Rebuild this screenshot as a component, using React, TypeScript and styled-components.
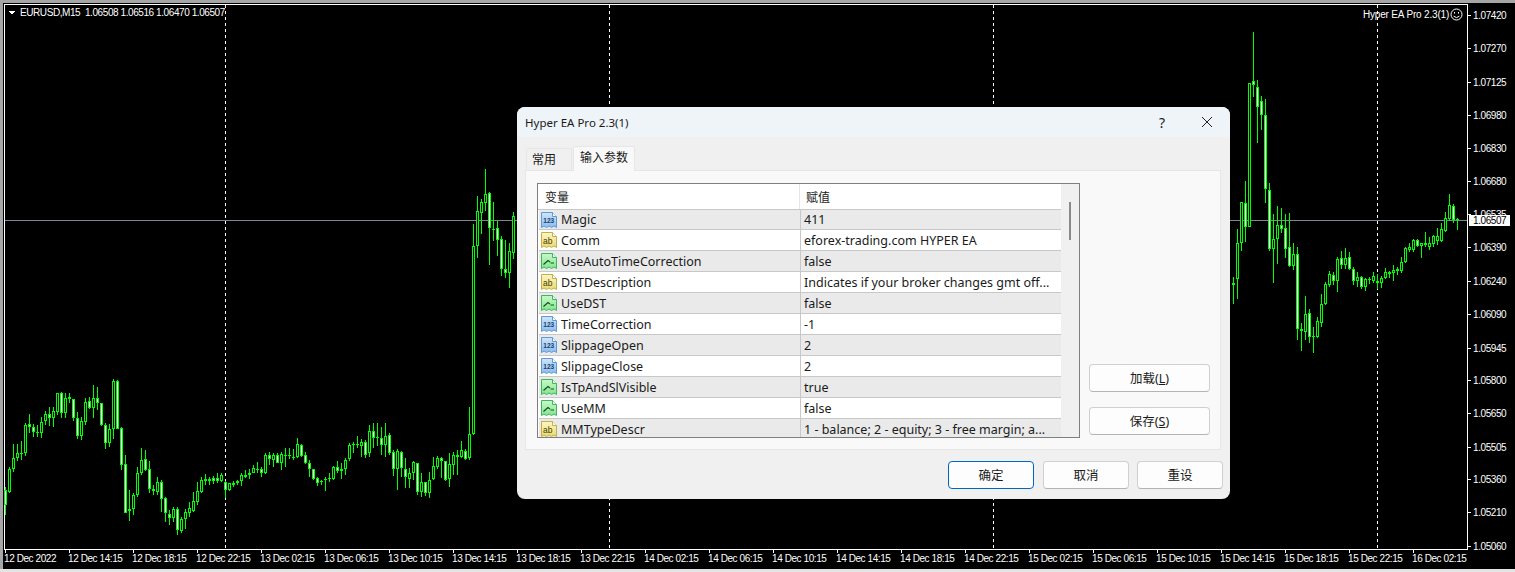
import React from "react";
import styled, { createGlobalStyle } from "styled-components";

const Global = createGlobalStyle`
  html, body { margin: 0; padding: 0; background: #000; overflow: hidden; }
  #root { width: 1515px; height: 572px; }
`;

type C = number[];
const segA: C[] = [
[350,360,405,435,1],[290,298,365,368,0],[222,265,298,305,0],[222,250,265,272,0],[213,250,250,270,0],[160,166,250,258,0],[132,163,170,190,1],[162,170,185,200,1],[165,185,188,200,0],[140,155,188,205,0],[122,133,152,165,0],[112,133,143,168,1],[110,124,143,172,0],[68,70,125,135,0],[65,68,128,143,1],[68,85,128,143,0],[68,82,88,100,1],[88,88,143,152,1],[125,145,197,208,1],[140,153,197,210,0],[85,95,155,165,0],[80,92,113,118,1],[45,85,113,145,0],[52,85,100,120,1],[98,100,166,168,1],[160,166,220,236,1],[163,178,220,232,0],[28,34,178,208,0],[30,34,176,178,1],[172,175,284,300,1],[255,283,428,430,1],[360,418,422,452,0],[368,376,418,435,0],[290,310,374,380,0],[235,270,310,316,0],[240,268,300,302,1],[272,298,358,370,1],[345,358,362,375,0],[322,336,365,376,0],[330,336,386,425,1],[380,385,430,456,1],[420,433,443,465,1],[410,418,443,455,0],[412,418,480,496,1],[440,448,483,490,0],[418,427,448,478,0],[395,415,428,440,0],[365,394,422,425,0],[335,364,395,405,0],[320,330,365,370,0],[312,328,332,345,0],[320,326,332,346,1],[318,324,332,342,1],[310,324,332,338,1],[308,316,332,335,0],[333,335,360,385,1],[340,340,360,362,0],[332,340,344,350,0],[330,334,340,345,0],[308,316,332,348,0],[300,316,320,325,0],[298,310,316,328,0],[285,294,308,310,0],[277,296,298,310,1],
];
const segB: C[] = [
[290,298,308,320,1],[250,256,308,312,0],[245,256,268,285,1],[250,254,270,290,0],[250,254,278,280,1],[245,252,278,300,0],[235,254,258,290,0],[235,256,256,266,0],[238,260,262,270,0],[205,222,262,265,0],[222,224,258,262,1],[245,256,278,282,1],[270,278,298,322,1],[296,298,326,330,1],[322,323,338,347,1],[330,332,335,345,0],[320,326,330,362,0],[308,325,328,335,0],[288,292,326,330,0],[272,292,302,308,1],[280,298,302,328,0],[265,270,298,315,0],[220,226,268,272,0],[215,222,224,250,0],[198,222,224,235,0],[208,216,228,262,0],[210,216,255,263,1],[165,184,250,260,0],[160,183,203,235,1],[158,202,205,228,1],[172,204,224,255,1],[158,198,224,262,0],[190,196,250,255,1],[240,246,296,318,1],[238,244,296,360,0],[244,246,293,320,1],[265,296,322,355,1],[295,310,326,353,0],[272,277,308,330,0],[278,280,365,375,1],[308,337,366,380,0],[335,337,368,378,1],[305,331,368,383,0],[262,289,328,330,0],[258,264,290,298,0],[260,265,274,325,1],[272,274,330,332,1],[250,283,328,352,0],[245,254,284,316,0],[240,256,262,315,1],
];
const segC: C[] = [
[843,870,890,895,0],[868,874,896,900,1],[742,823,895,900,0],[192,259,823,825,0],[108,154,257,293,0],[118,127,160,222,0],[27,103,128,153,0],[97,100,205,315,1],[126,207,208,243,0],[182,205,239,288,1],[228,238,328,348,1],[240,328,338,354,1],[250,274,338,384,0],[155,169,278,296,0],
];
const segD: C[] = [
[772,790,794,852,1],[628,670,776,836,0],[545,546,670,692,0],[484,548,622,665,1],[190,190,622,622,0],[37,184,196,232,1],[180,200,260,368,1],[228,244,284,330,1],[238,286,508,548,1],[488,511,688,692,1],[582,658,686,790,0],[558,616,656,732,0],[564,614,626,640,1],[582,625,686,714,1],[580,682,738,740,1],[670,703,738,750,0],[680,703,926,960,1],[910,926,932,992,1],[828,882,936,960,0],[868,880,950,970,1],[920,948,950,998,0],[892,904,950,955,0],[822,853,908,920,0],[785,793,853,855,0],[752,763,794,800,0],[755,766,784,795,1],[712,718,782,815,0],[694,714,734,748,1],[684,714,734,748,0],[695,712,746,750,1],[742,748,782,795,1],[755,772,782,800,0],[768,772,800,808,1],[775,778,800,812,0],[770,776,778,792,0],[755,768,782,790,0],[762,784,788,808,1],[768,774,790,805,0],[745,756,775,778,0],[752,756,762,775,0],[735,750,758,782,0],[742,746,752,765,0],[712,725,752,758,0],[680,684,726,730,0],[668,682,690,695,0],[658,660,690,695,0],[658,660,678,682,1],[668,670,678,715,0],[636,670,676,680,0],[652,670,682,690,0],[645,648,672,682,0],[625,648,662,675,0],[610,628,662,665,0],[575,595,632,636,0],[522,556,598,600,0],[552,558,600,610,1],[595,598,600,630,0],
];

const toCandles = (seg: C[], startX: number, originY: number) =>
  seg.map(([hi, top, bot, lo, white], i) => ({
    x: startX + i * 4,
    hi: Math.round(originY + hi / 3),
    top: Math.round(originY + top / 3),
    bot: Math.round(originY + bot / 3),
    lo: Math.round(originY + lo / 3),
    white: !!white,
  }));

const candles = [
  ...toCandles(segA, 5, 370),
  ...toCandles(segB, 261, 370),
  ...toCandles(segC, 461, 160),
  ...toCandles(segD, 1233, 20),
];

const prices = ["1.07420","1.07270","1.07125","1.06980","1.06830","1.06680","1.06535","1.06390","1.06240","1.06090","1.05945","1.05800","1.05650","1.05505","1.05360","1.05210","1.05060"];
const priceY = [15,48,82,115,148,181,214,247,281,314,348,380,413,447,479,512,546];

const hours = ["02:15","06:15","10:15","14:15","18:15","22:15"];
const times = [
  "12 Dec 2022","12 Dec 14:15","12 Dec 18:15","12 Dec 22:15",
  ...hours.map((h) => `13 Dec ${h}`),
  ...hours.map((h) => `14 Dec ${h}`),
  ...hours.map((h) => `15 Dec ${h}`),
  "16 Dec 02:15",
];

const Page = styled.div`
  position: relative;
  width: 1515px;
  height: 572px;
  background: #000;
  overflow: hidden;
`;

const ChartSvg = styled.svg`
  display: block;
`;

const ChartText = styled.text<{ $loose?: boolean }>`
  font-family: "Liberation Sans", Arial, sans-serif;
  font-size: 10px;
  letter-spacing: ${(p) => (p.$loose ? "-0.18px" : "-0.42px")};
  fill: #fff;
  white-space: pre;
`;

const TagText = styled(ChartText)`
  fill: #000;
`;

const Chart = () => (
  <ChartSvg width={1515} height={572} viewBox="0 0 1515 572" shapeRendering="crispEdges">
    <rect x={0} y={0} width={1515} height={3} fill="#a6a6a6" />
    <rect x={0} y={0} width={2.5} height={572} fill="#a6a6a6" />
    <rect x={0} y={569} width={1515} height={3} fill="#e4e4e4" />
    <rect x={4} y={4} width={1464} height={1} fill="#fff" />
    <rect x={4} y={4} width={1} height={546} fill="#fff" />
    <rect x={1467} y={4} width={1} height={546} fill="#fff" />
    <rect x={4} y={549} width={1464} height={1} fill="#fff" />

    {[225, 609, 993, 1377].map((x) => (
      <line key={x} x1={x + 0.5} x2={x + 0.5} y1={5} y2={548} stroke="#fff" strokeDasharray="3 3" />
    ))}
    <rect x={5} y={220} width={1462} height={1} fill="#778899" />

    {candles.map((c) => (
      <g key={c.x}>
        <rect x={c.x} y={c.hi} width={1} height={Math.max(c.lo - c.hi, 1)} fill="#00ff00" />
        <rect x={c.x - 1} y={c.top} width={3} height={Math.max(c.bot - c.top, 1)} fill="#00ff00" />
        {c.bot - c.top > 2 && (
          <rect x={c.x} y={c.top + 1} width={1} height={c.bot - c.top - 2} fill={c.white ? "#fff" : "#000"} />
        )}
      </g>
    ))}

    {prices.map((p, i) => (
      <g key={p}>
        <rect x={1468} y={priceY[i]} width={3} height={1} fill="#fff" />
        <ChartText x={1473} y={priceY[i] + 4}>{p}</ChartText>
      </g>
    ))}
    <rect x={1469} y={215} width={41} height={11} fill="#fff" />
    <TagText x={1473} y={224}>1.06507</TagText>

    {times.map((t, i) => (
      <g key={i}>
        <rect x={5 + i * 64} y={550} width={1} height={3} fill="#fff" />
        <ChartText x={4 + i * 64} y={562}>{t}</ChartText>
      </g>
    ))}

    <polygon points="8,11 15,11 11.5,14.5" fill="#fff" />
    <ChartText x={20} y={16}>EURUSD,M15  1.06508 1.06516 1.06470 1.06507</ChartText>
    <ChartText $loose x={1363} y={17.5}>Hyper EA Pro 2.3(1)</ChartText>
    <g shapeRendering="auto" fill="none" stroke="#fff">
      <circle cx={1456.5} cy={14.5} r={5.5} />
      <path d="M1453.6 16.2 q2.9 2.8 5.8 0" />
      <path d="M1454.5 12 v1.6 M1458.5 12 v1.6" />
    </g>
  </ChartSvg>
);

const Dialog = styled.div`
  position: absolute;
  left: 517px;
  top: 107px;
  width: 713px;
  height: 392px;
  border-radius: 8px;
  background: #f0f0f0;
  overflow: hidden;
  display: flex;
  flex-direction: column;
  font-family: "Noto Sans", "Noto Sans CJK SC", sans-serif;
  font-size: 12px;
  color: #1a1a1a;
`;

const TitleBar = styled.div`
  height: 30px;
  flex: none;
  background: #eff4f9;
  display: flex;
  align-items: center;
  padding: 0 17px 0 8px;
`;

const Title = styled.div`
  flex: 1;
  font-size: 11.5px;
`;

const HelpMark = styled.span`
  font-size: 14px;
  margin-right: 36px;
`;

const Body = styled.div`
  flex: 1;
  display: flex;
  flex-direction: column;
  padding: 9px 9px 0 8px;
  min-height: 0;
`;

const Tabs = styled.div`
  display: flex;
  align-items: flex-end;
  height: 24px;
  padding-left: 1px;
  flex: none;
`;

const Tab = styled.div<{ $active?: boolean }>`
  height: ${(p) => (p.$active ? 25 : 22)}px;
  width: ${(p) => (p.$active ? 62 : 46)}px;
  margin-left: ${(p) => (p.$active ? 1 : 0)}px;
  box-sizing: border-box;
  padding-left: ${(p) => (p.$active ? 6 : 5)}px;
  line-height: 22px;
  background: ${(p) => (p.$active ? "#f9f9f9" : "#f0f0f0")};
  border: 1px solid #e6e6e6;
  border-bottom: none;
  border-radius: 2px 2px 0 0;
  position: relative;
  z-index: 1;
  margin-bottom: ${(p) => (p.$active ? -1 : 0)}px;
`;

const Panel = styled.div`
  width: 696px;
  height: 280px;
  box-sizing: border-box;
  background: #f9f9f9;
  border: 1px solid #e6e6e6;
  padding: 12px 10px 12px 11px;
  display: flex;
  gap: 9px;
`;

const Table = styled.div`
  width: 543px;
  height: 255px;
  box-sizing: border-box;
  border: 1px solid #7f7f7f;
  background: #fff;
  display: flex;
  overflow: hidden;
  flex: none;
`;

const Grid = styled.div`
  flex: 1;
  display: flex;
  flex-direction: column;
  padding-left: 1px;
  overflow: hidden;
`;

const ScrollBar = styled.div`
  width: 18px;
  flex: none;
  background: #f0f0f0;
  position: relative;
`;

const Thumb = styled.div`
  position: absolute;
  left: 8px;
  top: 18px;
  width: 2px;
  height: 38px;
  background: #8a8a8a;
`;

const HeaderRow = styled.div`
  height: 26px;
  flex: none;
  box-sizing: border-box;
  display: grid;
  grid-template-columns: 261px 1fr;
  background: #fff;
  border-bottom: 1px solid #c8c8c8;
  margin-left: -1px;
`;

const HeaderCell = styled.div`
  display: flex;
  align-items: center;
  padding-left: 7px;
  & + & {
    border-left: 1px solid #e6e6e6;
    padding-left: 6px;
  }
`;

const Row = styled.div<{ $shade: boolean; $first?: boolean }>`
  height: ${(p) => (p.$first ? 20 : 21)}px;
  flex: none;
  box-sizing: border-box;
  display: grid;
  grid-template-columns: 261px 1fr;
  background: ${(p) => (p.$shade ? "#eaeaea" : "#fff")};
  border-bottom: 1px solid #c8c8c8;
  font-size: 12.5px;
`;

const NameCell = styled.div`
  display: flex;
  align-items: center;
  gap: 4px;
  padding-left: 2px;
  white-space: nowrap;
`;

const ValueCell = styled.div`
  display: flex;
  align-items: center;
  padding-left: 3px;
  border-left: 1px solid #c8c8c8;
  white-space: nowrap;
  overflow: hidden;
`;

const Side = styled.div`
  flex: 1;
  display: flex;
  flex-direction: column;
  justify-content: flex-end;
  gap: 15px;
  padding-bottom: 2px;
`;

const Button = styled.button<{ $primary?: boolean }>`
  height: 28px;
  box-sizing: border-box;
  font: inherit;
  font-size: 12.5px;
  color: #1a1a1a;
  background: #fdfdfd;
  border: 1px solid ${(p) => (p.$primary ? "#0067c0" : "#d0d0d0")};
  border-bottom-color: ${(p) => (p.$primary ? "#0067c0" : "#b4b4b4")};
  border-radius: 4px;
  padding: 0 0 2px;
`;

const Footer = styled.div`
  flex: 1;
  display: flex;
  justify-content: flex-end;
  align-items: flex-start;
  gap: 8px;
  padding-top: 11px;
  margin-right: -2px;
`;

const FooterButton = styled(Button)`
  width: 86px;
  margin-right: ${(p) => (p.$primary ? 1 : 0)}px;
`;

const Under = styled.span`
  text-decoration: underline;
`;

const Kind = {
  num: { light: "#d0e5fa", dark: "#8ebbea", stroke: "#5c9ad8", ink: "#14406f" },
  str: { light: "#fbf6c6", dark: "#eadb72", stroke: "#c4ae45", ink: "#4a3c00" },
  bool: { light: "#c8f8c8", dark: "#86e48e", stroke: "#3db65f", ink: "#0b5420" },
};

const IconText = styled.text`
  font-family: "Liberation Sans", sans-serif;
  text-anchor: middle;
`;

const TypeIcon = ({ kind }: { kind: keyof typeof Kind }) => {
  const k = Kind[kind];
  const id = `icon-${kind}`;
  return (
    <svg width={16} height={16} viewBox="0 0 16 16" style={{ flex: "none" }}>
      <defs>
        <linearGradient id={id} x1="0" y1="0" x2="0" y2="1">
          <stop offset="0" stopColor={k.light} />
          <stop offset="1" stopColor={k.dark} />
        </linearGradient>
      </defs>
      <path
        d="M.5 .5 h11 l4 4 v11 l-2.5 -1.5 -2.5 1.5 -2.5 -1.5 -2.5 1.5 -2.5 -1.5 -2.5 1.5 z"
        fill={`url(#${id})`}
        stroke={k.stroke}
      />
      <path d="M11.5 .5 v4 h4" fill="#fff" stroke={k.stroke} />
      {kind === "num" && (
        <IconText x={7.8} y={11} fontSize={6.5} fontWeight={700} fill={k.ink}>123</IconText>
      )}
      {kind === "str" && (
        <IconText x={6.8} y={11.5} fontSize={8.5} fill={k.ink}>ab</IconText>
      )}
      {kind === "bool" && (
        <path d="M2.5 11.5 L7 7.5 L9 9 M9.5 10 H13" fill="none" stroke={k.ink} strokeWidth={1.2} />
      )}
    </svg>
  );
};

const rows: { kind: keyof typeof Kind; name: string; value: string }[] = [
  { kind: "num", name: "Magic", value: "411" },
  { kind: "str", name: "Comm", value: "eforex-trading.com HYPER EA" },
  { kind: "bool", name: "UseAutoTimeCorrection", value: "false" },
  { kind: "str", name: "DSTDescription", value: "Indicates if your broker changes gmt off..." },
  { kind: "bool", name: "UseDST", value: "false" },
  { kind: "num", name: "TimeCorrection", value: "-1" },
  { kind: "num", name: "SlippageOpen", value: "2" },
  { kind: "num", name: "SlippageClose", value: "2" },
  { kind: "bool", name: "IsTpAndSlVisible", value: "true" },
  { kind: "bool", name: "UseMM", value: "false" },
  { kind: "str", name: "MMTypeDescr", value: "1 - balance; 2 - equity; 3 - free margin; a..." },
];

export default function App() {
  return (
    <Page>
      <Global />
      <Chart />
      <Dialog>
        <TitleBar>
          <Title>Hyper EA Pro 2.3(1)</Title>
          <HelpMark>?</HelpMark>
          <svg width={12} height={12} viewBox="0 0 12 12">
            <path d="M1 1 L11 11 M11 1 L1 11" stroke="#222" strokeWidth={1} fill="none" />
          </svg>
        </TitleBar>
        <Body>
          <Tabs>
            <Tab>常用</Tab>
            <Tab $active>输入参数</Tab>
          </Tabs>
          <Panel>
            <Table>
              <Grid>
                <HeaderRow>
                  <HeaderCell>变量</HeaderCell>
                  <HeaderCell>赋值</HeaderCell>
                </HeaderRow>
                {rows.map((r, i) => (
                  <Row key={r.name} $shade={i % 2 === 0} $first={i === 0}>
                    <NameCell>
                      <TypeIcon kind={r.kind} />
                      {r.name}
                    </NameCell>
                    <ValueCell>{r.value}</ValueCell>
                  </Row>
                ))}
              </Grid>
              <ScrollBar>
                <Thumb />
              </ScrollBar>
            </Table>
            <Side>
              <Button>加载(<Under>L</Under>)</Button>
              <Button>保存(<Under>S</Under>)</Button>
            </Side>
          </Panel>
          <Footer>
            <FooterButton $primary>确定</FooterButton>
            <FooterButton>取消</FooterButton>
            <FooterButton>重设</FooterButton>
          </Footer>
        </Body>
      </Dialog>
    </Page>
  );
}
